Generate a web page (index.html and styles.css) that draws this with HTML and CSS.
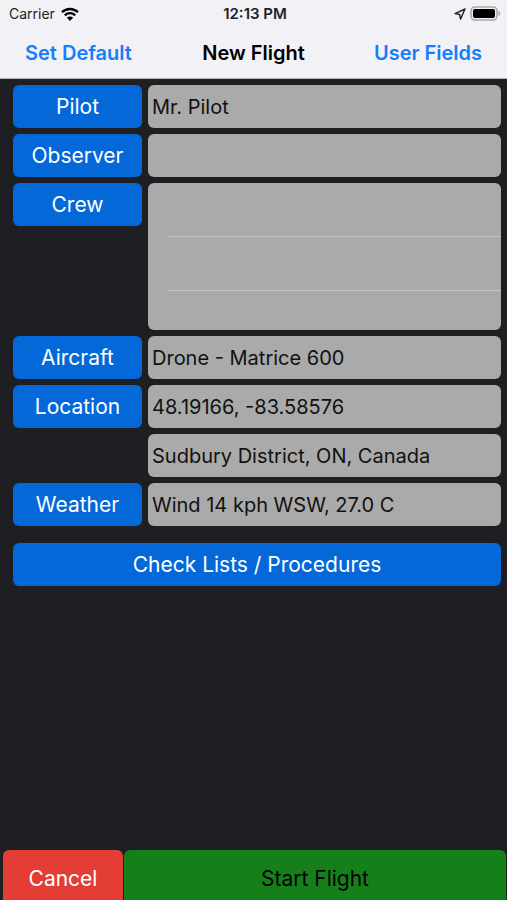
FILE: index.html
```html
<!DOCTYPE html>
<html lang="en">
<head>
<meta charset="utf-8">
<meta name="viewport" content="width=device-width, initial-scale=1">
<title>New Flight</title>
<link rel="stylesheet" href="styles.css">
</head>
<body>
<header class="top">
  <div class="status">
    <div class="status-left">
      <span>Carrier</span>
      <svg class="wifi" viewBox="0 0 18 14" aria-hidden="true">
        <path d="M1 5.2a11.6 11.6 0 0 1 16 0M3.8 8.3a7.5 7.5 0 0 1 10.4 0" fill="none" stroke="#000" stroke-width="2.3"/>
        <path d="M9 14 5.9 10.8a4.4 4.4 0 0 1 6.2 0z"/>
      </svg>
    </div>
    <div class="status-time">12:13 PM</div>
    <div class="status-right">
      <svg class="arrow" viewBox="0 0 12 12" aria-hidden="true">
        <path d="M11 1 1 5.6l4.6.9.9 4.6z" fill="none" stroke="#222" stroke-width="1.4" stroke-linejoin="round"/>
      </svg>
      <svg class="battery" viewBox="0 0 31 15" aria-hidden="true">
        <rect x="1" y="1" width="26" height="13" rx="4" fill="#f2f1f6" stroke="#a9a9ac" stroke-width="1.6"/>
        <rect x="3" y="3" width="22" height="9" rx="2"/>
        <path d="M28.5 5c2.4.8 2.4 4.2 0 5z" fill="#a9a9ac"/>
      </svg>
    </div>
  </div>
  <nav class="nav">
    <button class="nav-button" type="button">Set Default</button>
    <h1 class="title">New Flight</h1>
    <button class="nav-button nav-end" type="button">User Fields</button>
  </nav>
</header>
<main class="form">
  <button class="key" type="button">Pilot</button>
  <input class="field" type="text" aria-label="Pilot" value="Mr. Pilot">
  <button class="key" type="button">Observer</button>
  <input class="field" type="text" aria-label="Observer">
  <button class="key" type="button">Crew</button>
  <ul class="crew" aria-label="Crew">
    <li class="crew-row"></li>
    <li class="crew-row"></li>
    <li class="crew-row"></li>
  </ul>
  <button class="key" type="button">Aircraft</button>
  <input class="field" type="text" aria-label="Aircraft" value="Drone - Matrice 600">
  <button class="key" type="button">Location</button>
  <input class="field" type="text" aria-label="Coordinates" value="48.19166, -83.58576">
  <input class="field place" type="text" aria-label="Place" value="Sudbury District, ON, Canada">
  <button class="key" type="button">Weather</button>
  <input class="field" type="text" aria-label="Weather" value="Wind 14 kph WSW, 27.0 C">
  <button class="key wide" type="button">Check Lists / Procedures</button>
</main>
<footer class="actions">
  <button class="action cancel" type="button">Cancel</button>
  <button class="action start" type="button">Start Flight</button>
</footer>
</body>
</html>
```
FILE: styles.css
```css
* {
  box-sizing: border-box;
}

body {
  margin: 0;
  min-height: 100vh;
  display: flex;
  flex-direction: column;
  background: #1e1f23;
  color: #000;
  font-family: Inter, "Liberation Sans", sans-serif;
  font-size: 20px;
}

button,
input {
  margin: 0;
  border: 0;
  font: inherit;
}

.top {
  background: #f2f1f6;
  border-bottom: 1px solid #b4b4b8;
}

.status {
  display: grid;
  grid-template-columns: 1fr auto 1fr;
  align-items: center;
  height: 27px;
  padding: 0 6px 0 9px;
  font-size: 14px;
  color: #222;
}

.status-left,
.status-right {
  display: flex;
  align-items: center;
  gap: 6px;
}

.status-right {
  justify-content: flex-end;
  gap: 4px;
}

.status-time {
  font-size: 15px;
  font-weight: 600;
}

.wifi {
  width: 18px;
  height: 14px;
}

.arrow {
  width: 12px;
  height: 12px;
}

.battery {
  width: 31px;
  height: 15px;
}

.nav {
  display: grid;
  grid-template-columns: 1fr auto 1fr;
  align-items: center;
  height: 51px;
  padding: 0 25px;
}

.nav-button {
  justify-self: start;
  padding: 0;
  background: none;
  color: #147efb;
  font-weight: 600;
}

.nav-end {
  justify-self: end;
}

.title {
  margin: 0;
  font-size: 20px;
  font-weight: 600;
}

.form {
  flex: 1;
  display: grid;
  grid-template-columns: 129px 1fr;
  align-content: start;
  align-items: start;
  gap: 6px;
  padding: 6px 6px 6px 13px;
}

.key,
.field {
  height: 43px;
  border-radius: 6px;
}

.key {
  padding: 0;
  background: #0468d8;
  color: #fff;
  font-size: 21px;
}

.field {
  width: 100%;
  min-width: 0;
  padding: 0 4px;
  background: #aaa;
  color: #111;
}

.place {
  grid-column: 2;
}

.wide {
  grid-column: 1 / -1;
  margin-top: 11px;
}

.crew {
  margin: 0;
  padding: 0 0 0 19px;
  min-height: 147px;
  border-radius: 6px;
  background: #aaa;
  list-style: none;
}

.crew-row {
  height: 54px;
  border-bottom: 1px solid #c6c6c6;
}

.crew-row:last-child {
  height: 39px;
  border-bottom: 0;
}

.actions {
  display: grid;
  grid-template-columns: 120px 1fr;
  gap: 1px;
  padding: 0 1px 0 3px;
}

.action {
  height: 50px;
  padding: 6px 0 0;
  border-radius: 6px 6px 0 0;
  font-size: 21px;
}

.cancel {
  background: #e33d35;
  color: #fff;
}

.start {
  background: #15801a;
  color: #000;
}
```
